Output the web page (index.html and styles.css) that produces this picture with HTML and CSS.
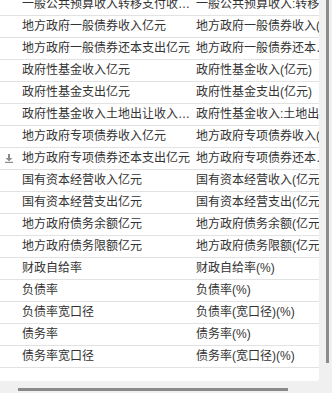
FILE: index.html
```html
<!DOCTYPE html>
<html lang="zh">
<head>
<meta charset="utf-8">
<link rel="stylesheet" href="styles.css">
</head>
<body>
<div class="frame">
  <div class="main">
    <div class="panel">
      <div class="list">
        <div class="row"><div class="c1"><span class="t">一般公共预算收入转移支付收入亿元</span></div><div class="c2"><span class="t">一般公共预算收入:转移支付收入(亿元)</span></div></div>
        <div class="row"><div class="c1"><span class="t">地方政府一般债券收入亿元</span></div><div class="c2"><span class="t">地方政府一般债券收入(亿元)</span></div></div>
        <div class="row"><div class="c1"><span class="t">地方政府一般债券还本支出亿元</span></div><div class="c2"><span class="t">地方政府一般债券还本支出(亿元)</span></div></div>
        <div class="row"><div class="c1"><span class="t">政府性基金收入亿元</span></div><div class="c2"><span class="t">政府性基金收入(亿元)</span></div></div>
        <div class="row"><div class="c1"><span class="t">政府性基金支出亿元</span></div><div class="c2"><span class="t">政府性基金支出(亿元)</span></div></div>
        <div class="row"><div class="c1"><span class="t">政府性基金收入土地出让收入亿元</span></div><div class="c2"><span class="t">政府性基金收入:土地出让收入(亿元)</span></div></div>
        <div class="row"><div class="c1"><span class="t">地方政府专项债券收入亿元</span></div><div class="c2"><span class="t">地方政府专项债券收入(亿元)</span></div></div>
        <div class="row"><div class="c1"><svg class="icon" width="8" height="9" viewBox="0 0 8 9"><path d="M3 0h2v4h2.5L4 7.2 0.5 4H3z" fill="#8a8a8a"/><rect x="0" y="7.8" width="8" height="1.2" fill="#8a8a8a"/></svg><span class="t">地方政府专项债券还本支出亿元</span></div><div class="c2"><span class="t">地方政府专项债券还本支出(亿元)</span></div></div>
        <div class="row"><div class="c1"><span class="t">国有资本经营收入亿元</span></div><div class="c2"><span class="t">国有资本经营收入(亿元)</span></div></div>
        <div class="row"><div class="c1"><span class="t">国有资本经营支出亿元</span></div><div class="c2"><span class="t">国有资本经营支出(亿元)</span></div></div>
        <div class="row"><div class="c1"><span class="t">地方政府债务余额亿元</span></div><div class="c2"><span class="t">地方政府债务余额(亿元)</span></div></div>
        <div class="row"><div class="c1"><span class="t">地方政府债务限额亿元</span></div><div class="c2"><span class="t">地方政府债务限额(亿元)</span></div></div>
        <div class="row"><div class="c1"><span class="t">财政自给率</span></div><div class="c2"><span class="t">财政自给率(%)</span></div></div>
        <div class="row"><div class="c1"><span class="t">负债率</span></div><div class="c2"><span class="t">负债率(%)</span></div></div>
        <div class="row"><div class="c1"><span class="t">负债率宽口径</span></div><div class="c2"><span class="t">负债率(宽口径)(%)</span></div></div>
        <div class="row"><div class="c1"><span class="t">债务率</span></div><div class="c2"><span class="t">债务率(%)</span></div></div>
        <div class="row"><div class="c1"><span class="t">债务率宽口径</span></div><div class="c2"><span class="t">债务率(宽口径)(%)</span></div></div>
      </div>
    </div>
    <div class="vbar"><div class="vthumb"></div></div>
  </div>
  <div class="hbar"><div class="hthumb"></div></div>
</div>
</body>
</html>
```
FILE: styles.css
```css
html, body {
  margin: 0;
  padding: 0;
}
body {
  background: #f0f0f0;
  font-family: "Liberation Sans", "Noto Sans CJK SC", sans-serif;
  font-size: 12px;
  color: #333333;
  width: 332px;
  height: 393px;
  overflow: hidden;
}
.frame {
  display: flex;
  flex-direction: column;
  width: 332px;
  height: 393px;
}
.main {
  display: flex;
  height: 381px;
}
.panel {
  width: 319px;
  height: 381px;
  background: #ffffff;
  overflow: hidden;
  border-bottom-right-radius: 3px;
}
.list {
  margin-top: -6px;
  width: 319px;
}
.row {
  display: flex;
  height: 21px;
  border-bottom: 1px solid #e2e2e2;
  align-items: center;
  width: 319px;
  overflow: hidden;
}
.c1 {
  flex: 0 0 194px;
  width: 194px;
  display: flex;
  align-items: center;
  padding-left: 22px;
  padding-right: 2px;
  box-sizing: border-box;
  position: relative;
  overflow: hidden;
}
.c2 {
  flex: 0 0 141px;
  width: 141px;
  padding-left: 2px;
  box-sizing: border-box;
  overflow: hidden;
}
.t {
  display: block;
  white-space: nowrap;
  overflow: hidden;
  text-overflow: ellipsis;
  line-height: 21px;
  min-width: 0;
}
.icon {
  position: absolute;
  left: 5px;
  top: 6px;
}
.vbar {
  flex: 1;
  display: flex;
  justify-content: center;
  padding-left: 7px;
  box-sizing: border-box;
}
.vthumb {
  width: 3px;
  height: 363px;
  background: #8a8a8a;
  margin-right: 3px;
}
.hbar {
  height: 12px;
  padding-top: 7px;
  padding-left: 18px;
  box-sizing: border-box;
}
.hthumb {
  width: 270px;
  height: 3px;
  background: #8a8a8a;
}
```
